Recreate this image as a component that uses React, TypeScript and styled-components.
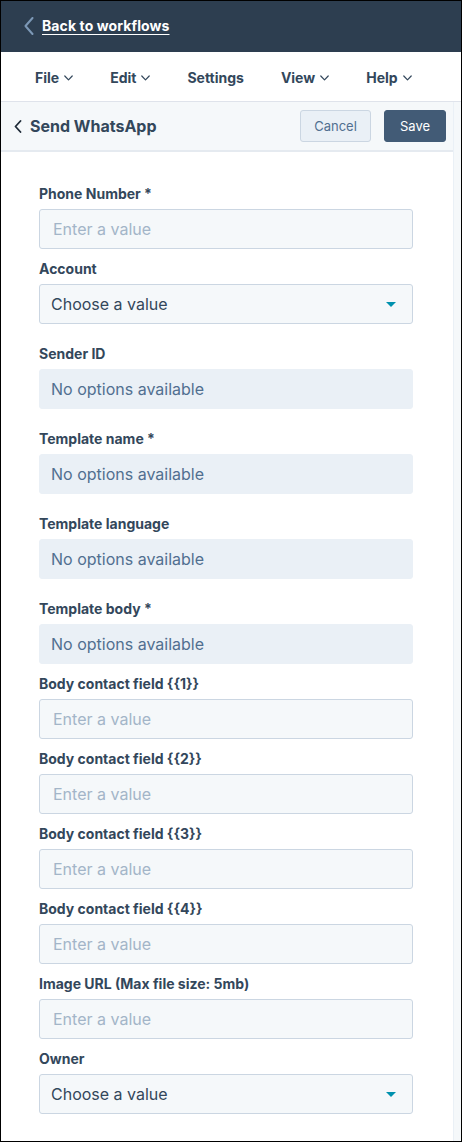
import React from 'react'
import styled, { createGlobalStyle } from 'styled-components'

const GlobalStyle = createGlobalStyle`
    * {
        box-sizing: border-box;
    }
    body {
        margin: 0;
        font-family: Inter, 'Noto Sans', sans-serif;
        color: #33475b;
        background: #ffffff;
    }
`

type FieldKind = 'input' | 'select' | 'disabled'

interface FieldDef {
    label: string
    kind: FieldKind
    tight?: boolean
}

const fields: FieldDef[] = [
    { label: 'Phone Number *', kind: 'input' },
    { label: 'Account', kind: 'select' },
    { label: 'Sender ID', kind: 'disabled' },
    { label: 'Template name *', kind: 'disabled' },
    { label: 'Template language', kind: 'disabled' },
    { label: 'Template body *', kind: 'disabled', tight: true },
    { label: 'Body contact field {{1}}', kind: 'input' },
    { label: 'Body contact field {{2}}', kind: 'input' },
    { label: 'Body contact field {{3}}', kind: 'input' },
    { label: 'Body contact field {{4}}', kind: 'input' },
    { label: 'Image URL (Max file size: 5mb)', kind: 'input' },
    { label: 'Owner', kind: 'select' },
]

const menu = [
    { name: 'File', caret: true },
    { name: 'Edit', caret: true },
    { name: 'Settings', caret: false },
    { name: 'View', caret: true },
    { name: 'Help', caret: true },
]

const ChevronDown = () => (
    <svg width="9" height="6" viewBox="0 0 9 6" fill="none">
        <path d="M0.8 1L4.5 4.8L8.2 1" stroke="#33475b" strokeWidth="1.2" strokeLinecap="round" strokeLinejoin="round" />
    </svg>
)

const App: React.FC = () => {
    return (
        <Frame>
            <GlobalStyle />
            <TopBar>
                <svg width="10" height="18" viewBox="0 0 10 18" fill="none">
                    <path d="M8.5 1L1.5 9L8.5 17" stroke="#7c98b6" strokeWidth="2" strokeLinecap="round" strokeLinejoin="round" />
                </svg>
                <BackLink>Back to workflows</BackLink>
            </TopBar>
            <MenuBar>
                {menu.map(m => (
                    <MenuItem key={m.name}>
                        {m.name}
                        {m.caret && <ChevronDown />}
                    </MenuItem>
                ))}
            </MenuBar>
            <Body>
                <Main>
                    <SubHeader>
                        <Title>
                            <svg width="8" height="13" viewBox="0 0 8 13" fill="none">
                                <path d="M6.5 1L1.5 6.5L6.5 12" stroke="#1f2b38" strokeWidth="1.8" strokeLinecap="round" strokeLinejoin="round" />
                            </svg>
                            Send WhatsApp
                        </Title>
                        <Actions>
                            <Button variant="secondary">Cancel</Button>
                            <Button variant="primary">Save</Button>
                        </Actions>
                    </SubHeader>
                    <Form>
                        {fields.map(f => (
                            <Field key={f.label} spaced={f.kind !== 'input' && !f.tight}>
                                <Label>{f.label}</Label>
                                <Control kind={f.kind}>
                                    {f.kind === 'input' && <Placeholder>Enter a value</Placeholder>}
                                    {f.kind === 'disabled' && <span>No options available</span>}
                                    {f.kind === 'select' && (
                                        <>
                                            <span>Choose a value</span>
                                            <Caret />
                                        </>
                                    )}
                                </Control>
                            </Field>
                        ))}
                    </Form>
                </Main>
                <ScrollTrack />
            </Body>
        </Frame>
    )
}

export default App

const Frame = styled.div`
    width: 462px;
    height: 1142px;
    border: 1px solid #000000;
    display: flex;
    flex-direction: column;
    overflow: hidden;
    background: #ffffff;
`

const TopBar = styled.div`
    height: 51px;
    flex-shrink: 0;
    background: #2d3e50;
    display: flex;
    align-items: center;
    padding: 0 0 2px 23px;
    gap: 8px;
`

const BackLink = styled.a`
    color: #ffffff;
    font-size: 14px;
    font-weight: 700;
    text-decoration: underline;
    text-underline-offset: 3px;
    text-decoration-thickness: 1px;
    letter-spacing: 0.1px;
    cursor: pointer;
`

const MenuBar = styled.div`
    height: 50px;
    flex-shrink: 0;
    display: flex;
    align-items: center;
    padding: 2px 0 0 34px;
    gap: 37px;
    border-bottom: 1px solid #dfe3eb;
`

const MenuItem = styled.div`
    display: flex;
    align-items: center;
    gap: 5px;
    font-size: 14px;
    font-weight: 700;
    color: #33475b;
`

const Body = styled.div`
    flex: 1;
    display: flex;
    min-height: 0;
`

const Main = styled.div`
    flex: 1;
    display: flex;
    flex-direction: column;
`

const ScrollTrack = styled.div`
    width: 8px;
    background: #f5f8fa;
    border-left: 1px solid #eaf0f6;
`

const SubHeader = styled.div`
    height: 50px;
    flex-shrink: 0;
    background: #f5f8fa;
    border-bottom: 2px solid #e5eaf0;
    display: flex;
    align-items: center;
    justify-content: space-between;
    padding: 0 7px 0 13px;
`

const Title = styled.div`
    display: flex;
    align-items: center;
    gap: 8px;
    font-size: 16px;
    font-weight: 700;
    color: #33475b;
`

const Actions = styled.div`
    display: flex;
    gap: 13px;
`

const Button = styled.button<{ variant: 'primary' | 'secondary' }>`
    height: 32px;
    border-radius: 3px;
    font-family: Inter, 'Noto Sans', sans-serif;
    font-size: 13px;
    padding: 0;
    cursor: pointer;
    width: ${p => (p.variant === 'primary' ? '62px' : '71px')};
    background: ${p => (p.variant === 'primary' ? '#425b76' : '#eaf0f6')};
    color: ${p => (p.variant === 'primary' ? '#ffffff' : '#516f90')};
    border: 1px solid ${p => (p.variant === 'primary' ? '#425b76' : '#cbd6e2')};
`

const Form = styled.div`
    padding: 32px 40px 0 38px;
    display: flex;
    flex-direction: column;
`

const Field = styled.div<{ spaced: boolean }>`
    display: flex;
    flex-direction: column;
    gap: 5px;
    margin-bottom: ${p => (p.spaced ? '20px' : '10px')};
`

const Label = styled.label`
    font-size: 14px;
    line-height: 20px;
    font-weight: 700;
    color: #33475b;
`

const Control = styled.div<{ kind: FieldKind }>`
    height: 40px;
    border-radius: 3px;
    display: flex;
    align-items: center;
    justify-content: space-between;
    font-size: 16px;
    padding: 0 16px 0 ${p => (p.kind === 'input' ? '13px' : '11px')};
    background: ${p => (p.kind === 'disabled' ? '#eaf0f6' : '#f5f8fa')};
    border: 1px solid ${p => (p.kind === 'disabled' ? '#eaf0f6' : '#cbd6e2')};
    color: ${p => (p.kind === 'disabled' ? '#516f90' : '#33475b')};
`

const Placeholder = styled.span`
    color: #a3b5c8;
`

const Caret = styled.span`
    width: 0;
    height: 0;
    border-left: 5px solid transparent;
    border-right: 5px solid transparent;
    border-top: 5px solid #0091ae;
`
